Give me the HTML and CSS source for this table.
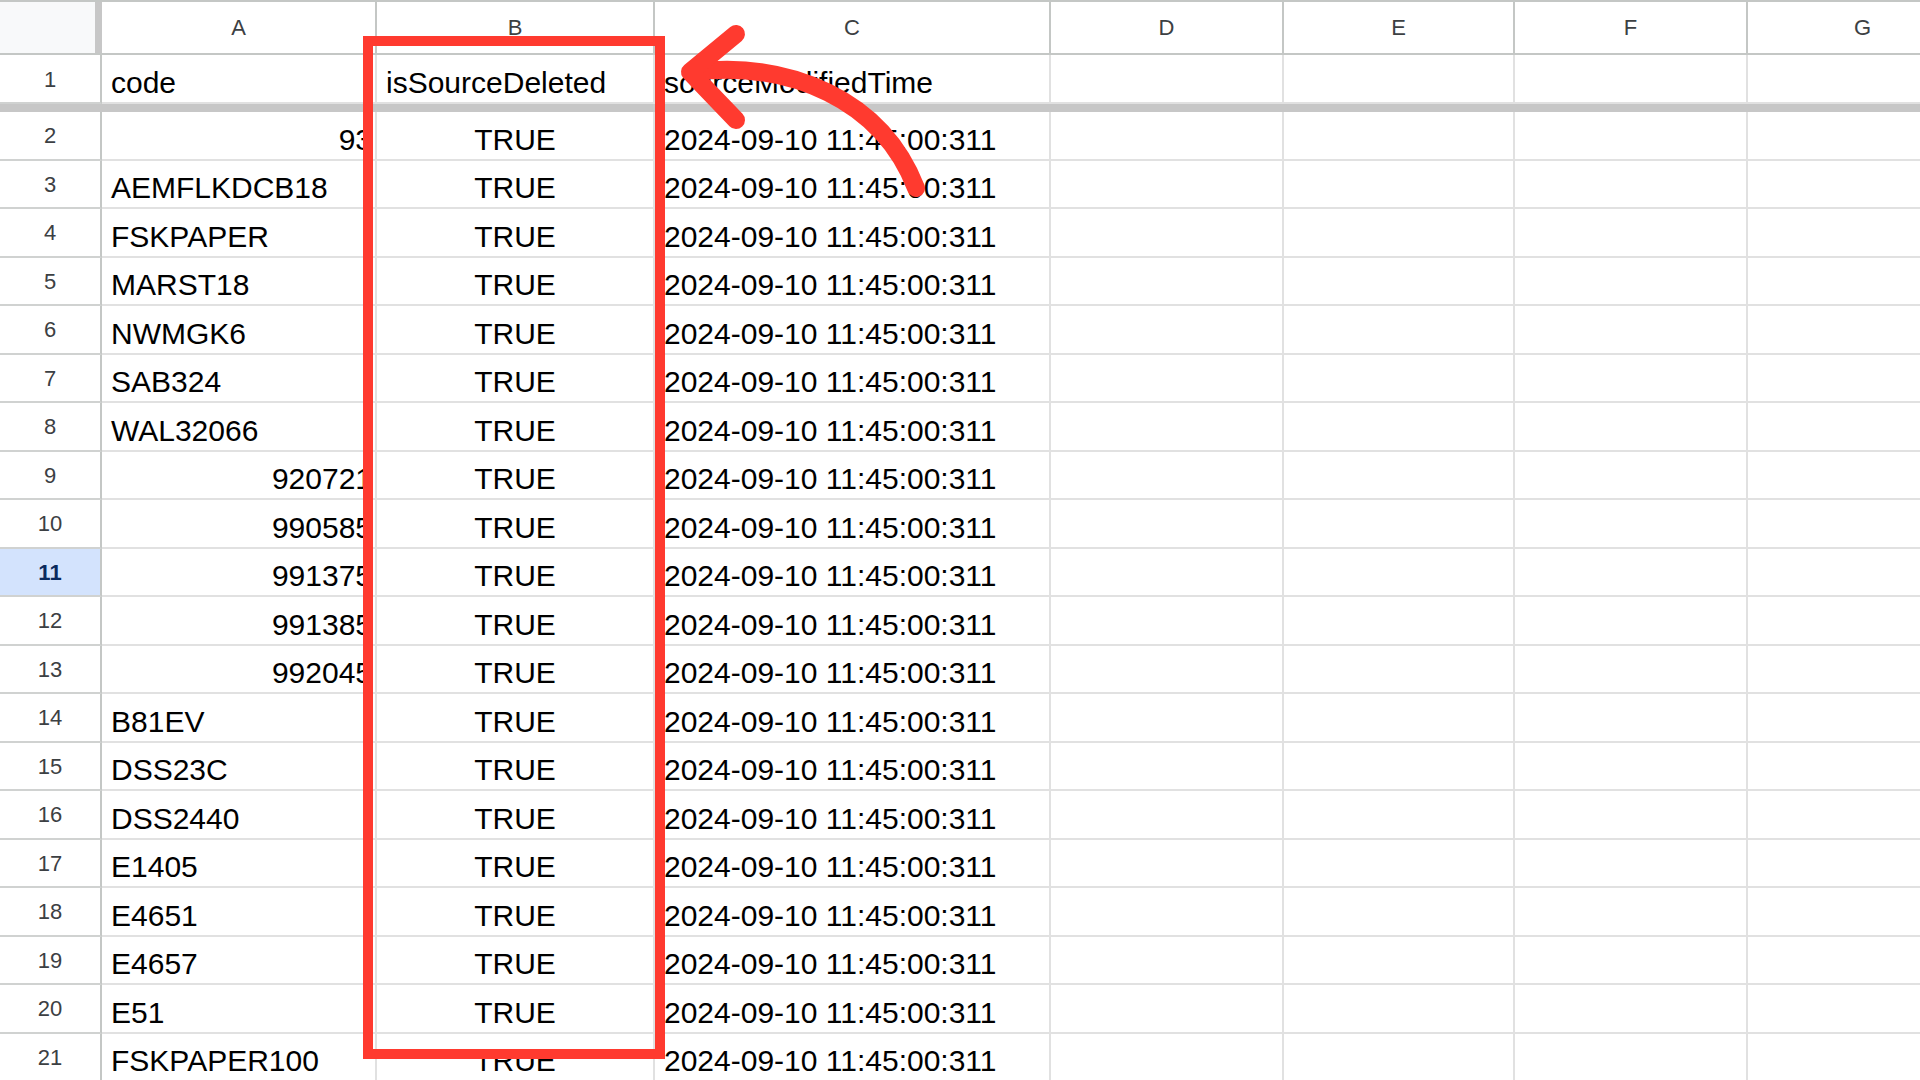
FILE: index.html
```html
<!DOCTYPE html>
<html>
<head>
<meta charset="utf-8">
<link rel="stylesheet" href="styles.css">
</head>
<body>
<div class="sheet">
  <div class="row colhead">
    <div class="corner"></div>
    <div class="ch">A</div><div class="ch">B</div><div class="ch">C</div><div class="ch">D</div><div class="ch">E</div><div class="ch">F</div><div class="ch">G</div>
  </div>
  <div class="row r1">
    <div class="rh">1</div><div class="c">code</div><div class="c">isSourceDeleted</div><div class="c">sourceModifiedTime</div><div class="c"></div><div class="c"></div><div class="c"></div><div class="c"></div>
  </div>
  <div class="freeze"></div>
  <div class="row"><div class="rh">2</div><div class="c num">93</div><div class="c mid">TRUE</div><div class="c">2024-09-10 11:45:00:311</div><div class="c"></div><div class="c"></div><div class="c"></div><div class="c"></div></div>
  <div class="row"><div class="rh">3</div><div class="c">AEMFLKDCB18</div><div class="c mid">TRUE</div><div class="c">2024-09-10 11:45:00:311</div><div class="c"></div><div class="c"></div><div class="c"></div><div class="c"></div></div>
  <div class="row"><div class="rh">4</div><div class="c">FSKPAPER</div><div class="c mid">TRUE</div><div class="c">2024-09-10 11:45:00:311</div><div class="c"></div><div class="c"></div><div class="c"></div><div class="c"></div></div>
  <div class="row"><div class="rh">5</div><div class="c">MARST18</div><div class="c mid">TRUE</div><div class="c">2024-09-10 11:45:00:311</div><div class="c"></div><div class="c"></div><div class="c"></div><div class="c"></div></div>
  <div class="row"><div class="rh">6</div><div class="c">NWMGK6</div><div class="c mid">TRUE</div><div class="c">2024-09-10 11:45:00:311</div><div class="c"></div><div class="c"></div><div class="c"></div><div class="c"></div></div>
  <div class="row"><div class="rh">7</div><div class="c">SAB324</div><div class="c mid">TRUE</div><div class="c">2024-09-10 11:45:00:311</div><div class="c"></div><div class="c"></div><div class="c"></div><div class="c"></div></div>
  <div class="row"><div class="rh">8</div><div class="c">WAL32066</div><div class="c mid">TRUE</div><div class="c">2024-09-10 11:45:00:311</div><div class="c"></div><div class="c"></div><div class="c"></div><div class="c"></div></div>
  <div class="row"><div class="rh">9</div><div class="c num">920721</div><div class="c mid">TRUE</div><div class="c">2024-09-10 11:45:00:311</div><div class="c"></div><div class="c"></div><div class="c"></div><div class="c"></div></div>
  <div class="row"><div class="rh">10</div><div class="c num">990585</div><div class="c mid">TRUE</div><div class="c">2024-09-10 11:45:00:311</div><div class="c"></div><div class="c"></div><div class="c"></div><div class="c"></div></div>
  <div class="row"><div class="rh sel">11</div><div class="c num">991375</div><div class="c mid">TRUE</div><div class="c">2024-09-10 11:45:00:311</div><div class="c"></div><div class="c"></div><div class="c"></div><div class="c"></div></div>
  <div class="row"><div class="rh">12</div><div class="c num">991385</div><div class="c mid">TRUE</div><div class="c">2024-09-10 11:45:00:311</div><div class="c"></div><div class="c"></div><div class="c"></div><div class="c"></div></div>
  <div class="row"><div class="rh">13</div><div class="c num">992045</div><div class="c mid">TRUE</div><div class="c">2024-09-10 11:45:00:311</div><div class="c"></div><div class="c"></div><div class="c"></div><div class="c"></div></div>
  <div class="row"><div class="rh">14</div><div class="c">B81EV</div><div class="c mid">TRUE</div><div class="c">2024-09-10 11:45:00:311</div><div class="c"></div><div class="c"></div><div class="c"></div><div class="c"></div></div>
  <div class="row"><div class="rh">15</div><div class="c">DSS23C</div><div class="c mid">TRUE</div><div class="c">2024-09-10 11:45:00:311</div><div class="c"></div><div class="c"></div><div class="c"></div><div class="c"></div></div>
  <div class="row"><div class="rh">16</div><div class="c">DSS2440</div><div class="c mid">TRUE</div><div class="c">2024-09-10 11:45:00:311</div><div class="c"></div><div class="c"></div><div class="c"></div><div class="c"></div></div>
  <div class="row"><div class="rh">17</div><div class="c">E1405</div><div class="c mid">TRUE</div><div class="c">2024-09-10 11:45:00:311</div><div class="c"></div><div class="c"></div><div class="c"></div><div class="c"></div></div>
  <div class="row"><div class="rh">18</div><div class="c">E4651</div><div class="c mid">TRUE</div><div class="c">2024-09-10 11:45:00:311</div><div class="c"></div><div class="c"></div><div class="c"></div><div class="c"></div></div>
  <div class="row"><div class="rh">19</div><div class="c">E4657</div><div class="c mid">TRUE</div><div class="c">2024-09-10 11:45:00:311</div><div class="c"></div><div class="c"></div><div class="c"></div><div class="c"></div></div>
  <div class="row"><div class="rh">20</div><div class="c">E51</div><div class="c mid">TRUE</div><div class="c">2024-09-10 11:45:00:311</div><div class="c"></div><div class="c"></div><div class="c"></div><div class="c"></div></div>
  <div class="row"><div class="rh">21</div><div class="c">FSKPAPER100</div><div class="c mid">TRUE</div><div class="c">2024-09-10 11:45:00:311</div><div class="c"></div><div class="c"></div><div class="c"></div><div class="c"></div></div>

  <svg class="annot" width="1920" height="1080" viewBox="0 0 1920 1080">
    <rect x="368" y="41" width="292" height="1013" fill="none" stroke="#ff3a2f" stroke-width="10"/>
    <path d="M692 72 C790 60 882 100 916 188" fill="none" stroke="#ff3a2f" stroke-width="18" stroke-linecap="round"/>
    <path d="M736 34 L690 72 L736 120" fill="none" stroke="#ff3a2f" stroke-width="18" stroke-linecap="round" stroke-linejoin="round"/>
  </svg>
</div>
</body>
</html>
```

FILE: styles.css
```css
html, body {
  margin: 0;
  padding: 0;
  background: #ffffff;
}
body {
  overflow: hidden;
  font-family: "Liberation Sans", Arial, sans-serif;
}
.sheet {
  position: relative;
  width: 1920px;
  height: 1080px;
  overflow: hidden;
}
.row {
  display: grid;
  grid-template-columns: 102px 275px 278px 396px 233px 231px 233px 231px;
  height: 48.5px;
}
.row > div {
  box-sizing: border-box;
  min-width: 0;
}
.colhead {
  height: 55px;
  border-top: 2px solid #c4c7c5;
  border-bottom: 2px solid #c4c7c5;
  box-sizing: border-box;
}
.corner {
  background: #f8f9fa;
  border-right: 7px solid #c7c7c7;
}
.ch {
  display: flex;
  align-items: center;
  justify-content: center;
  font-family: "Liberation Sans", Arial, sans-serif;
  font-size: 22px;
  color: #3c4043;
  border-right: 2px solid #c4c7c5;
}
.r1 {
  height: 49px;
}
.freeze {
  height: 8px;
  background: #c7c7c7;
}
.rh {
  display: flex;
  align-items: center;
  justify-content: center;
  padding-top: 2px;
  font-family: "Liberation Sans", Arial, sans-serif;
  font-size: 22px;
  color: #3c4043;
  border-right: 2px solid #c4c7c5;
  border-bottom: 2px solid #d0d2d1;
}
.rh.sel {
  background: #d3e3fd;
  color: #0a2a5e;
  font-weight: bold;
}
.c {
  display: flex;
  align-items: flex-end;
  justify-content: flex-start;
  padding: 0 8px 2px 9px;
  font-size: 30px;
  line-height: 34px;
  color: #000000;
  white-space: nowrap;
  overflow: hidden;
  border-right: 2px solid #e1e1e1;
  border-bottom: 2px solid #e1e1e1;
}
.c.num {
  justify-content: flex-end;
  padding-right: 3px;
}
.c.mid {
  justify-content: center;
  padding-left: 0;
  padding-right: 0;
}
.annot {
  position: absolute;
  left: 0;
  top: 0;
  pointer-events: none;
}
```
